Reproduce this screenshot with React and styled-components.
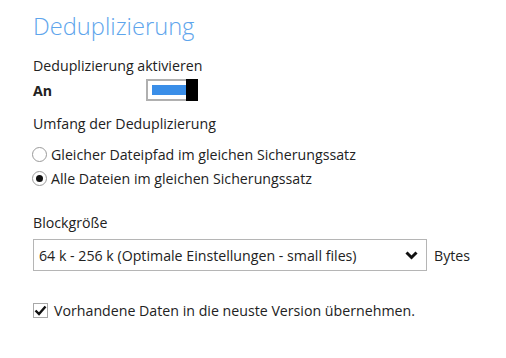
import React from 'react';
import styled, { createGlobalStyle } from 'styled-components';

const Global = createGlobalStyle`
  body {
    margin: 0;
    background: #fff;
    font-family: 'Open Sans', 'Liberation Sans', sans-serif;
    color: #222;
  }
`;

const Page = styled.div`
  padding: 10px 0 0 33px;
  width: 506px;
  height: 358px;
  box-sizing: border-box;
`;

const Title = styled.h1`
  margin: 0;
  font-size: 23.7px;
  font-weight: 300;
  color: #5ea5ec;
  line-height: 33px;
`;

const Label = styled.div`
  font-size: 14.2px;
  line-height: 20px;
  margin-top: ${p => p.top || 0}px;
`;

const ToggleRow = styled.div`
  display: flex;
  align-items: center;
  margin-top: 3px;
`;

const State = styled.span`
  font-size: 14.2px;
  font-weight: 700;
  width: 113px;
`;

const Toggle = styled.div`
  display: flex;
  width: 52px;
  height: 22px;
`;

const Track = styled.div`
  flex: 1;
  border: 2px solid #b0b0b0;
  border-right: none;
  padding: 4px 0 4px 4px;
  background: #fff;
  > div {
    height: 100%;
    background: #3a8ee8;
  }
`;

const Knob = styled.div`
  width: 12px;
  background: #000;
`;

const RadioGroup = styled.div`
  margin-top: 8px;
`;

const RadioRow = styled.label`
  display: flex;
  align-items: center;
  gap: 4px;
  font-size: 14.2px;
  height: 24px;
`;

const Radio = styled.span`
  width: 13px;
  height: 13px;
  margin-left: -1px;
  border: 1px solid #9a9a9a;
  border-radius: 50%;
  display: flex;
  align-items: center;
  justify-content: center;
  &::after {
    content: '';
    width: 7px;
    height: 7px;
    border-radius: 50%;
    background: ${p => (p.checked ? '#111' : 'transparent')};
  }
`;

const SelectRow = styled.div`
  display: flex;
  align-items: center;
  gap: 7px;
  margin-top: 6px;
  font-size: 14.2px;
`;

const Select = styled.div`
  width: 394px;
  height: 32px;
  box-sizing: border-box;
  border: 1px solid #b5b5b5;
  display: flex;
  align-items: center;
  justify-content: space-between;
  padding: 0 8px 0 5px;
`;

const CheckRow = styled.label`
  display: flex;
  align-items: center;
  gap: 6px;
  margin-top: 30px;
  font-size: 14.2px;
`;

const Check = styled.span`
  width: 15px;
  height: 15px;
  box-sizing: border-box;
  border: 1px solid #a8a8a8;
  display: flex;
  align-items: center;
  justify-content: center;
`;

export default function App() {
  return (
    <>
      <Global />
      <Page>
        <Title>Deduplizierung</Title>
        <Label top={13}>Deduplizierung aktivieren</Label>
        <ToggleRow>
          <State>An</State>
          <Toggle>
            <Track><div /></Track>
            <Knob />
          </Toggle>
        </ToggleRow>
        <Label top={13}>Umfang der Deduplizierung</Label>
        <RadioGroup>
          <RadioRow><Radio />Gleicher Dateipfad im gleichen Sicherungssatz</RadioRow>
          <RadioRow><Radio checked />Alle Dateien im gleichen Sicherungssatz</RadioRow>
        </RadioGroup>
        <Label top={23}>Blockgröße</Label>
        <SelectRow>
          <Select>
            <span>64 k - 256 k (Optimale Einstellungen - small files)</span>
            <svg width="13" height="9" viewBox="0 0 13 9">
              <path d="M1.5 1.5 L6.5 6.5 L11.5 1.5" fill="none" stroke="#111" strokeWidth="3" />
            </svg>
          </Select>
          <span>Bytes</span>
        </SelectRow>
        <CheckRow>
          <Check>
            <svg width="13" height="11" viewBox="0 0 13 11">
              <path d="M1.5 5.5 L5 9 L11.5 1.5" fill="none" stroke="#111" strokeWidth="2.4" />
            </svg>
          </Check>
          Vorhandene Daten in die neuste Version übernehmen.
        </CheckRow>
      </Page>
    </>
  );
}
